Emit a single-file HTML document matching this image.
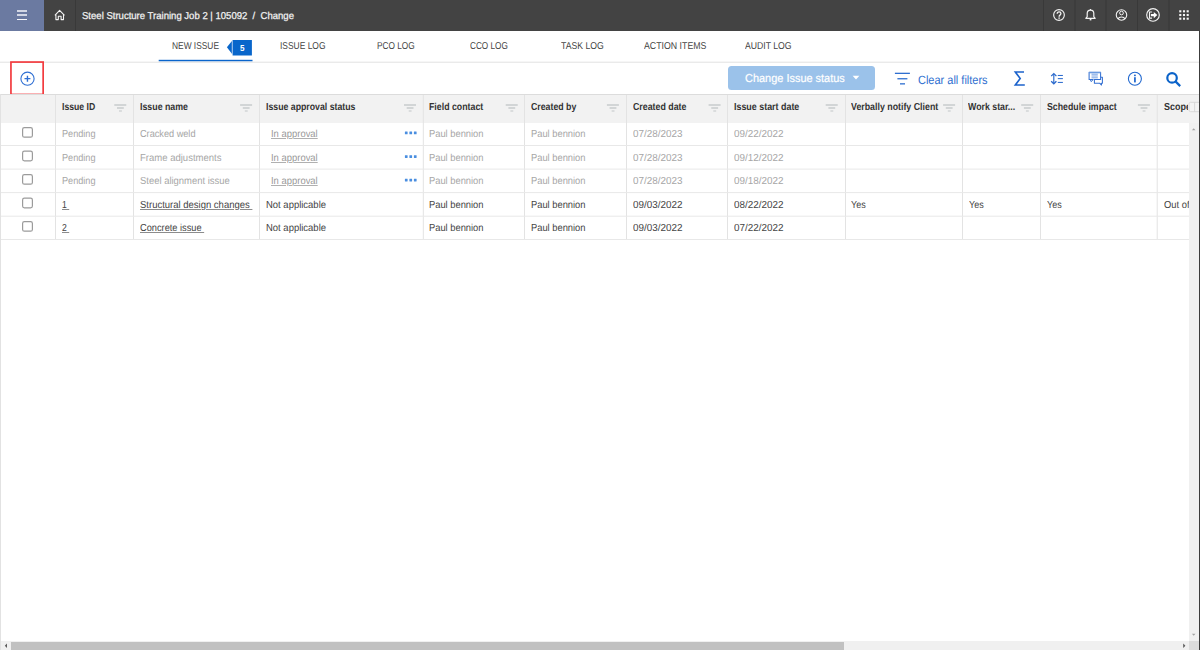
<!DOCTYPE html>
<html><head><meta charset="utf-8">
<style>
html,body{margin:0;padding:0;width:1200px;height:650px;overflow:hidden;background:#fff;}
body{position:relative;font-family:"Liberation Sans", sans-serif;}
.a{position:absolute;}
.t{position:absolute;white-space:nowrap;line-height:1;transform-origin:0 50%;text-rendering:geometricPrecision;}
svg{position:absolute;overflow:visible;}
</style></head><body>
<!-- ===== top bar ===== -->
<div class="a" style="left:0;top:0;width:1200px;height:31px;background:#434343;"></div>
<div class="a" style="left:0;top:0;width:44px;height:31px;background:#6b7aa1;"></div>
<!-- hamburger -->
<div class="a" style="left:16.9px;top:9.95px;width:10.2px;height:1.9px;background:#d3d7e4;"></div>
<div class="a" style="left:16.9px;top:13.95px;width:10.2px;height:1.9px;background:#d3d7e4;"></div>
<div class="a" style="left:16.9px;top:18.85px;width:10.2px;height:1.25px;background:#f6f6f9;"></div>
<!-- home -->
<svg style="left:0;top:0" width="1200" height="31">
  <path d="M54.9 15.4 L59.6 10.4 L64.5 15.4 M55.9 14.6 V19.6 H58.3 V16.3 H61.1 V19.6 H63.5 V14.6" fill="none" stroke="#f4f4f4" stroke-width="1.1" stroke-linejoin="round"/>
  <!-- dividers -->
  <rect x="75" y="0" width="1" height="31" fill="#393939"/>
  <rect x="1043" y="0" width="1" height="31" fill="#393939"/>
  <rect x="1074.5" y="0" width="1" height="31" fill="#393939"/>
  <rect x="1105.5" y="0" width="1" height="31" fill="#393939"/>
  <rect x="1137" y="0" width="1" height="31" fill="#393939"/>
  <rect x="1168.5" y="0" width="1" height="31" fill="#393939"/>
  <!-- help -->
  <circle cx="1059" cy="15" r="5.35" fill="none" stroke="#f2f2f2" stroke-width="1.15"/>
  <path d="M1057.2 13.7 C1057.2 12.2 1058 11.8 1059.1 11.8 C1060.2 11.8 1060.9 12.5 1060.9 13.4 C1060.9 14.9 1059.1 15 1059.1 16.7" fill="none" stroke="#f2f2f2" stroke-width="1.35"/>
  <rect x="1058.4" y="17.4" width="1.4" height="1.4" fill="#f2f2f2"/>
  <!-- bell -->
  <path d="M1085.8 18.3 H1095.2 L1093.8 16.6 V13.4 C1093.8 11.3 1092.4 10.1 1090.5 10.1 C1088.6 10.1 1087.2 11.3 1087.2 13.4 V16.6 Z" fill="none" stroke="#f2f2f2" stroke-width="1.2" stroke-linejoin="round"/>
  <rect x="1089.9" y="9" width="1.1" height="1.4" fill="#f2f2f2"/>
  <rect x="1089.7" y="18.8" width="1.7" height="1.6" fill="#f2f2f2"/>
  <!-- user -->
  <circle cx="1121.5" cy="15" r="5.25" fill="none" stroke="#f2f2f2" stroke-width="1.1"/>
  <circle cx="1121.5" cy="13" r="1.85" fill="none" stroke="#f2f2f2" stroke-width="1"/>
  <path d="M1118.1 19 C1118.9 16.2 1124.1 16.2 1124.9 19" fill="none" stroke="#f2f2f2" stroke-width="1.05"/>
  <!-- logout -->
  <circle cx="1153" cy="14.95" r="6.3" fill="none" stroke="#f2f2f2" stroke-width="1.15"/>
  <path d="M1152.1 12 H1149.5 V18.1 H1152.1" fill="none" stroke="#f2f2f2" stroke-width="1.1"/>
  <path d="M1150.9 14 H1153.8 V11.9 L1157.3 15.1 L1153.8 18.3 V16.3 H1150.9 Z" fill="#ffffff"/>
  <!-- grid -->
  <g fill="#f6f6f6"><rect x="1179.25" y="10.25" width="2.1" height="2.1"/><rect x="1182.95" y="10.25" width="2.1" height="2.1"/><rect x="1186.65" y="10.25" width="2.1" height="2.1"/><rect x="1179.25" y="13.95" width="2.1" height="2.1"/><rect x="1182.95" y="13.95" width="2.1" height="2.1"/><rect x="1186.65" y="13.95" width="2.1" height="2.1"/><rect x="1179.25" y="17.65" width="2.1" height="2.1"/><rect x="1182.95" y="17.65" width="2.1" height="2.1"/><rect x="1186.65" y="17.65" width="2.1" height="2.1"/></g>
</svg>

<!-- ===== tabs ===== -->
<svg style="left:0;top:0" width="1200" height="100">
  <rect x="158.7" y="59.8" width="93.8" height="1.6" fill="#0a65cc"/>
  <rect x="0" y="61.6" width="1200" height="1.3" fill="#e8e8e8"/>
  <path d="M232.6 40 H251.9 V55.5 H232.6 Z" fill="#0866cb"/>
  <path d="M231.9 40.9 V53.7 L226.9 47.3 Z" fill="#0866cb"/>
  <rect x="231.9" y="40.6" width="0.75" height="13.4" fill="#86b3e6"/>
</svg>

<!-- ===== toolbar ===== -->
<div class="a" style="left:0;top:94px;width:1px;height:556px;background:#e2e2e2;"></div>
<div class="a" style="left:1198.6px;top:31px;width:1.4px;height:619px;background:#3c3c3c;"></div>
<div class="a" style="left:727.9px;top:66.1px;width:147px;height:23.7px;background:#9bc2ea;border-radius:3.5px;"></div>
<svg style="left:0;top:0" width="1200" height="100">
  <!-- red box + plus -->
  <rect x="10.95" y="62.05" width="32.2" height="32.4" fill="none" stroke="#f23b3f" stroke-width="1.7"/>
  <circle cx="27.5" cy="78.7" r="6.6" fill="none" stroke="#2f6fd3" stroke-width="1.1"/>
  <path d="M27.45 75.8 V81.7 M24.5 78.65 H30.4" stroke="#2f6fd3" stroke-width="1.4"/>
  <!-- caret -->
  <path d="M852.6 75.7 H859.4 L856 79.4 Z" fill="#ffffff"/>
  <!-- filter -->
  <g fill="#2f6fd0">
    <rect x="894.9" y="72.7" width="15" height="1.3"/>
    <rect x="897.4" y="78.1" width="10" height="1.3"/>
    <rect x="900" y="83.2" width="5" height="1.3"/>
  </g>
  <!-- sigma -->
  <path d="M1024 72 H1015.3 L1020.2 78.5 L1015.3 85 H1024.8" fill="none" stroke="#1c63cc" stroke-width="1.6" stroke-linejoin="miter"/>
  <!-- line height -->
  <path d="M1053.8 73.9 V83.6" stroke="#2a69cc" stroke-width="1.15"/>
  <path d="M1051.2 76.1 L1053.8 73.6 L1056.4 76.1 M1051.2 81.3 L1053.8 83.8 L1056.4 81.3" fill="none" stroke="#2a69cc" stroke-width="1.3" stroke-linejoin="miter"/>
  <g fill="#2f6dcf"><rect x="1057.8" y="74.95" width="5.1" height="1.05"/><rect x="1057.8" y="78.1" width="5.1" height="1.05"/><rect x="1057.8" y="81.9" width="5.1" height="1.05"/></g>
  <!-- chat -->
  <path d="M1093.4 79.4 H1089.1 V72.3 H1100.6 V77.2" fill="none" stroke="#3470d2" stroke-width="1.05" stroke-linejoin="round"/>
  <rect x="1089.1" y="72" width="11.6" height="1.3" fill="#6b9be0"/>
  <path d="M1090.3 79.4 L1091.1 81.6 L1093.2 79.6" fill="none" stroke="#3470d2" stroke-width="1" stroke-linejoin="round"/>
  <g fill="#7aa4e4"><rect x="1091.5" y="73.7" width="6.3" height="1"/><rect x="1091.5" y="75.5" width="6.3" height="1"/><rect x="1091.5" y="77.3" width="6.3" height="1"/></g>
  <path d="M1100.6 77.2 H1102.4 V83.2 H1101.4 L1101.5 85 L1099.6 83.2 H1094.4 V79.4 H1100.6 Z" fill="none" stroke="#3470d2" stroke-width="1.05" stroke-linejoin="round"/>
  <!-- info -->
  <circle cx="1134.9" cy="78.8" r="6.5" fill="none" stroke="#2168cf" stroke-width="1.1"/>
  <rect x="1134.05" y="77.2" width="1.75" height="5.2" fill="#2168cf"/>
  <rect x="1134.05" y="74.6" width="1.75" height="1.6" rx="0.4" fill="#2168cf"/>
  <!-- search -->
  <circle cx="1172.05" cy="77.95" r="4.75" fill="none" stroke="#0b63c9" stroke-width="2.2"/>
  <path d="M1175.5 81.4 L1180.2 86.1" stroke="#0b63c9" stroke-width="2.2"/>
</svg>

<!-- ===== table ===== -->
<div class="a" style="left:1px;top:94px;width:1198px;height:1px;background:#dcdcdc;"></div>
<div class="a" style="left:1px;top:95px;width:1188px;height:27.6px;background:#f2f2f2;"></div>
<svg style="left:0;top:0" width="1200" height="650">
  <g fill="#e3e3e3">
    <rect x="55" y="95" width="1" height="145"/>
    <rect x="133" y="95" width="1" height="145"/>
    <rect x="259" y="95" width="1" height="145"/>
    <rect x="422.8" y="95" width="1" height="145"/>
    <rect x="524" y="95" width="1" height="145"/>
    <rect x="626" y="95" width="1" height="145"/>
    <rect x="727" y="95" width="1" height="145"/>
    <rect x="845" y="95" width="1" height="145"/>
    <rect x="962" y="95" width="1" height="145"/>
    <rect x="1040" y="95" width="1" height="145"/>
    <rect x="1156.7" y="95" width="1" height="145"/>
  </g>
  <g fill="#e8e8e8">
    <rect x="1" y="145" width="1188" height="1"/>
    <rect x="1" y="168.6" width="1188" height="1"/>
    <rect x="1" y="192.1" width="1188" height="1"/>
    <rect x="1" y="215.7" width="1188" height="1"/>
    <rect x="1" y="239" width="1188" height="1"/>
  </g>
  <!-- header filter icons -->
  <g fill="#d2d5d6">
    <path transform="translate(0 0)" d="M114.3 104 h12 v1.9 h-12z M117 107.1 h6.8 v1.8 h-6.8z M119 110.2 h2.9 v1.6 h-2.9z"/>
    <path transform="translate(125.8 0)" d="M114.3 104 h12 v1.9 h-12z M117 107.1 h6.8 v1.8 h-6.8z M119 110.2 h2.9 v1.6 h-2.9z"/>
    <path transform="translate(289.7 0)" d="M114.3 104 h12 v1.9 h-12z M117 107.1 h6.8 v1.8 h-6.8z M119 110.2 h2.9 v1.6 h-2.9z"/>
    <path transform="translate(391.4 0)" d="M114.3 104 h12 v1.9 h-12z M117 107.1 h6.8 v1.8 h-6.8z M119 110.2 h2.9 v1.6 h-2.9z"/>
    <path transform="translate(492.6 0)" d="M114.3 104 h12 v1.9 h-12z M117 107.1 h6.8 v1.8 h-6.8z M119 110.2 h2.9 v1.6 h-2.9z"/>
    <path transform="translate(594.3 0)" d="M114.3 104 h12 v1.9 h-12z M117 107.1 h6.8 v1.8 h-6.8z M119 110.2 h2.9 v1.6 h-2.9z"/>
    <path transform="translate(711.4 0)" d="M114.3 104 h12 v1.9 h-12z M117 107.1 h6.8 v1.8 h-6.8z M119 110.2 h2.9 v1.6 h-2.9z"/>
    <path transform="translate(828.8 0)" d="M114.3 104 h12 v1.9 h-12z M117 107.1 h6.8 v1.8 h-6.8z M119 110.2 h2.9 v1.6 h-2.9z"/>
    <path transform="translate(906.9 0)" d="M114.3 104 h12 v1.9 h-12z M117 107.1 h6.8 v1.8 h-6.8z M119 110.2 h2.9 v1.6 h-2.9z"/>
    <path transform="translate(1023.6 0)" d="M114.3 104 h12 v1.9 h-12z M117 107.1 h6.8 v1.8 h-6.8z M119 110.2 h2.9 v1.6 h-2.9z"/>
  </g>
  <!-- checkboxes -->
  <g fill="none" stroke="#9b9b9b" stroke-width="1.2">
    <rect x="22.6" y="127.6" width="9.8" height="9.6" rx="1.8"/>
    <rect x="22.6" y="151.2" width="9.8" height="9.6" rx="1.8"/>
    <rect x="22.6" y="174.6" width="9.8" height="9.6" rx="1.8"/>
    <rect x="22.6" y="198.2" width="9.8" height="9.6" rx="1.8"/>
    <rect x="22.6" y="221.6" width="9.8" height="9.6" rx="1.8"/>
  </g>
  <!-- dots -->
  <g fill="#4a8ee0"><rect x="404.9" y="131.6" width="2.7" height="2.7" rx="0.3"/><rect x="409.4" y="131.6" width="2.7" height="2.7" rx="0.3"/><rect x="413.9" y="131.6" width="2.7" height="2.7" rx="0.3"/><rect x="404.9" y="155.2" width="2.7" height="2.7" rx="0.3"/><rect x="409.4" y="155.2" width="2.7" height="2.7" rx="0.3"/><rect x="413.9" y="155.2" width="2.7" height="2.7" rx="0.3"/><rect x="404.9" y="178.7" width="2.7" height="2.7" rx="0.3"/><rect x="409.4" y="178.7" width="2.7" height="2.7" rx="0.3"/><rect x="413.9" y="178.7" width="2.7" height="2.7" rx="0.3"/></g>
</svg>

<!-- ===== scrollbars ===== -->
<div class="a" style="left:1188.8px;top:122.6px;width:9.8px;height:518.4px;background:#f0f0f0;"></div>
<svg style="left:0;top:0" width="1200" height="650">
  <path d="M1191.9 130.2 L1193.7 128.2 L1195.5 130.2 Z" fill="#a3a3a3"/>
  <path d="M1191.9 633.8 L1193.7 635.8 L1195.5 633.8 Z" fill="#a3a3a3"/>
</svg>
<div class="a" style="left:1px;top:641px;width:1188px;height:9px;background:#f0f0f0;"></div>
<div class="a" style="left:11px;top:641.8px;width:833px;height:8.2px;background:#c1c1c1;"></div>
<div class="a" style="left:1188.8px;top:641px;width:9.8px;height:9px;background:#dcdcdc;"></div>
<svg style="left:0;top:0" width="1200" height="650">
  <path d="M4.8 645.8 L7 643.6 V648 Z" fill="#5c5c5c"/>
  <path d="M1185.4 645.8 L1183.2 643.6 V648 Z" fill="#5c5c5c"/>
</svg>

<span class="t" style="left:82.00px;top:12px;font-size:10.0px;font-weight:400;color:#f2f2f2;-webkit-text-stroke:0.25px #f2f2f2;transform:scaleX(0.9541);">Steel Structure Training Job 2 | 105092 &nbsp;/&nbsp; Change</span>
<span class="t" style="left:172.00px;top:42px;font-size:10.0px;font-weight:400;color:#444444;transform:scaleX(0.8374);">NEW ISSUE</span>
<span class="t" style="left:279.50px;top:42px;font-size:10.0px;font-weight:400;color:#444444;transform:scaleX(0.8441);">ISSUE LOG</span>
<span class="t" style="left:376.60px;top:42px;font-size:10.0px;font-weight:400;color:#444444;transform:scaleX(0.8272);">PCO LOG</span>
<span class="t" style="left:469.70px;top:42px;font-size:10.0px;font-weight:400;color:#444444;transform:scaleX(0.8195);">CCO LOG</span>
<span class="t" style="left:560.60px;top:42px;font-size:10.0px;font-weight:400;color:#444444;transform:scaleX(0.8665);">TASK LOG</span>
<span class="t" style="left:644.00px;top:42px;font-size:10.0px;font-weight:400;color:#444444;transform:scaleX(0.8773);">ACTION ITEMS</span>
<span class="t" style="left:744.80px;top:42px;font-size:10.0px;font-weight:400;color:#444444;transform:scaleX(0.8675);">AUDIT LOG</span>
<span class="t" style="left:240.00px;top:44px;font-size:8.6px;font-weight:700;color:#ffffff;transform:scaleX(0.9412);">5</span>
<span class="t" style="left:744.50px;top:74px;font-size:11.5px;font-weight:400;color:#ffffff;-webkit-text-stroke:0.2px #ffffff;transform:scaleX(0.9519);">Change Issue status</span>
<span class="t" style="left:918.40px;top:74px;font-size:12.0px;font-weight:400;color:#2f6fd0;transform:scaleX(0.9154);">Clear all filters</span>
<span class="t" style="left:61.70px;top:103px;font-size:10.2px;font-weight:700;color:#333333;transform:scaleX(0.8521);">Issue ID</span>
<span class="t" style="left:139.50px;top:103px;font-size:10.2px;font-weight:700;color:#333333;transform:scaleX(0.8649);">Issue name</span>
<span class="t" style="left:265.60px;top:103px;font-size:10.2px;font-weight:700;color:#333333;transform:scaleX(0.8590);">Issue approval status</span>
<span class="t" style="left:429.30px;top:103px;font-size:10.2px;font-weight:700;color:#333333;transform:scaleX(0.8625);">Field contact</span>
<span class="t" style="left:530.70px;top:103px;font-size:10.2px;font-weight:700;color:#333333;transform:scaleX(0.8603);">Created by</span>
<span class="t" style="left:632.50px;top:103px;font-size:10.2px;font-weight:700;color:#333333;transform:scaleX(0.8652);">Created date</span>
<span class="t" style="left:734.00px;top:103px;font-size:10.2px;font-weight:700;color:#333333;transform:scaleX(0.8736);">Issue start date</span>
<span class="t" style="left:851.30px;top:103px;font-size:10.2px;font-weight:700;color:#333333;transform:scaleX(0.8654);">Verbally notify Client</span>
<span class="t" style="left:968.10px;top:103px;font-size:10.2px;font-weight:700;color:#333333;transform:scaleX(0.8623);">Work star...</span>
<span class="t" style="left:1046.80px;top:103px;font-size:10.2px;font-weight:700;color:#333333;transform:scaleX(0.8608);">Schedule impact</span>
<span class="t" style="left:1164.00px;top:103px;font-size:10.2px;font-weight:700;color:#333333;transform:scaleX(0.8800);">Scope</span>
<span class="t" style="left:61.70px;top:130px;font-size:10.2px;font-weight:400;color:#a6a6a6;transform:scaleX(0.8959);">Pending</span>
<span class="t" style="left:139.50px;top:130px;font-size:10.2px;font-weight:400;color:#a6a6a6;transform:scaleX(0.8992);">Cracked weld</span>
<span class="t" style="left:271.30px;top:130px;font-size:10.2px;font-weight:400;color:#999999;text-decoration:underline;text-decoration-color:#b0b0b0;transform:scaleX(0.9265);">In approval</span>
<span class="t" style="left:429.40px;top:130px;font-size:10.2px;font-weight:400;color:#a6a6a6;transform:scaleX(0.9162);">Paul bennion</span>
<span class="t" style="left:530.80px;top:130px;font-size:10.2px;font-weight:400;color:#a6a6a6;transform:scaleX(0.9162);">Paul bennion</span>
<span class="t" style="left:632.50px;top:130px;font-size:10.2px;font-weight:400;color:#a6a6a6;transform:scaleX(0.9706);">07/28/2023</span>
<span class="t" style="left:734.20px;top:130px;font-size:10.2px;font-weight:400;color:#a6a6a6;transform:scaleX(0.9706);">09/22/2022</span>
<span class="t" style="left:61.70px;top:154px;font-size:10.2px;font-weight:400;color:#a6a6a6;transform:scaleX(0.8959);">Pending</span>
<span class="t" style="left:139.50px;top:154px;font-size:10.2px;font-weight:400;color:#a6a6a6;transform:scaleX(0.9346);">Frame adjustments</span>
<span class="t" style="left:271.30px;top:154px;font-size:10.2px;font-weight:400;color:#999999;text-decoration:underline;text-decoration-color:#b0b0b0;transform:scaleX(0.9265);">In approval</span>
<span class="t" style="left:429.40px;top:154px;font-size:10.2px;font-weight:400;color:#a6a6a6;transform:scaleX(0.9162);">Paul bennion</span>
<span class="t" style="left:530.80px;top:154px;font-size:10.2px;font-weight:400;color:#a6a6a6;transform:scaleX(0.9162);">Paul bennion</span>
<span class="t" style="left:632.50px;top:154px;font-size:10.2px;font-weight:400;color:#a6a6a6;transform:scaleX(0.9706);">07/28/2023</span>
<span class="t" style="left:734.20px;top:154px;font-size:10.2px;font-weight:400;color:#a6a6a6;transform:scaleX(0.9706);">09/12/2022</span>
<span class="t" style="left:61.70px;top:177px;font-size:10.2px;font-weight:400;color:#a6a6a6;transform:scaleX(0.8959);">Pending</span>
<span class="t" style="left:139.50px;top:177px;font-size:10.2px;font-weight:400;color:#a6a6a6;transform:scaleX(0.9268);">Steel alignment issue</span>
<span class="t" style="left:271.30px;top:177px;font-size:10.2px;font-weight:400;color:#999999;text-decoration:underline;text-decoration-color:#b0b0b0;transform:scaleX(0.9265);">In approval</span>
<span class="t" style="left:429.40px;top:177px;font-size:10.2px;font-weight:400;color:#a6a6a6;transform:scaleX(0.9162);">Paul bennion</span>
<span class="t" style="left:530.80px;top:177px;font-size:10.2px;font-weight:400;color:#a6a6a6;transform:scaleX(0.9162);">Paul bennion</span>
<span class="t" style="left:632.50px;top:177px;font-size:10.2px;font-weight:400;color:#a6a6a6;transform:scaleX(0.9706);">07/28/2023</span>
<span class="t" style="left:734.20px;top:177px;font-size:10.2px;font-weight:400;color:#a6a6a6;transform:scaleX(0.9706);">09/18/2022</span>
<span class="t" style="left:61.50px;top:201px;font-size:10.2px;font-weight:400;color:#444444;text-decoration:underline;text-decoration-color:#8c8c8c;transform:scaleX(0.8471);">1&nbsp;</span>
<span class="t" style="left:139.50px;top:201px;font-size:10.2px;font-weight:400;color:#444444;text-decoration:underline;text-decoration-color:#8c8c8c;transform:scaleX(0.9318);">Structural design changes&nbsp;</span>
<span class="t" style="left:265.50px;top:201px;font-size:10.2px;font-weight:400;color:#444444;transform:scaleX(0.9293);">Not applicable</span>
<span class="t" style="left:429.40px;top:201px;font-size:10.2px;font-weight:400;color:#444444;transform:scaleX(0.9162);">Paul bennion</span>
<span class="t" style="left:530.80px;top:201px;font-size:10.2px;font-weight:400;color:#444444;transform:scaleX(0.9162);">Paul bennion</span>
<span class="t" style="left:632.50px;top:201px;font-size:10.2px;font-weight:400;color:#444444;transform:scaleX(0.9706);">09/03/2022</span>
<span class="t" style="left:734.20px;top:201px;font-size:10.2px;font-weight:400;color:#444444;transform:scaleX(0.9706);">08/22/2022</span>
<span class="t" style="left:851.40px;top:201px;font-size:10.2px;font-weight:400;color:#444444;transform:scaleX(0.8842);">Yes</span>
<span class="t" style="left:969.10px;top:201px;font-size:10.2px;font-weight:400;color:#444444;transform:scaleX(0.8842);">Yes</span>
<span class="t" style="left:1047.20px;top:201px;font-size:10.2px;font-weight:400;color:#444444;transform:scaleX(0.8842);">Yes</span>
<span class="t" style="left:1163.80px;top:201px;font-size:10.2px;font-weight:400;color:#444444;transform:scaleX(0.9200);">Out of</span>
<span class="t" style="left:61.50px;top:224px;font-size:10.2px;font-weight:400;color:#444444;text-decoration:underline;text-decoration-color:#8c8c8c;transform:scaleX(0.8471);">2&nbsp;</span>
<span class="t" style="left:139.50px;top:224px;font-size:10.2px;font-weight:400;color:#444444;text-decoration:underline;text-decoration-color:#8c8c8c;transform:scaleX(0.9063);">Concrete issue&nbsp;</span>
<span class="t" style="left:265.50px;top:224px;font-size:10.2px;font-weight:400;color:#444444;transform:scaleX(0.9293);">Not applicable</span>
<span class="t" style="left:429.40px;top:224px;font-size:10.2px;font-weight:400;color:#444444;transform:scaleX(0.9162);">Paul bennion</span>
<span class="t" style="left:530.80px;top:224px;font-size:10.2px;font-weight:400;color:#444444;transform:scaleX(0.9162);">Paul bennion</span>
<span class="t" style="left:632.50px;top:224px;font-size:10.2px;font-weight:400;color:#444444;transform:scaleX(0.9706);">09/03/2022</span>
<span class="t" style="left:734.20px;top:224px;font-size:10.2px;font-weight:400;color:#444444;transform:scaleX(0.9706);">07/22/2022</span>
<div class="a" style="left:1188px;top:95px;width:10.6px;height:27.6px;background:#f2f2f2;"></div>
<div class="a" style="left:1188.8px;top:122.6px;width:9.8px;height:518.4px;background:#f0f0f0;"></div>
<svg style="left:0;top:0" width="1200" height="650">
  <rect x="1189" y="102.3" width="12" height="9.4" rx="1.6" fill="#f4f4f4" stroke="#d6d6d6" stroke-width="0.9"/>
  <rect x="1194.2" y="102.3" width="0.9" height="9.4" fill="#d6d6d6"/>
  <path d="M1191.9 130.2 L1193.7 128.2 L1195.5 130.2 Z" fill="#a3a3a3"/>
  <path d="M1191.9 633.8 L1193.7 635.8 L1195.5 633.8 Z" fill="#a3a3a3"/>
</svg>
<div class="a" style="left:1198.6px;top:31px;width:1.4px;height:619px;background:#3c3c3c;"></div>

</body></html>
